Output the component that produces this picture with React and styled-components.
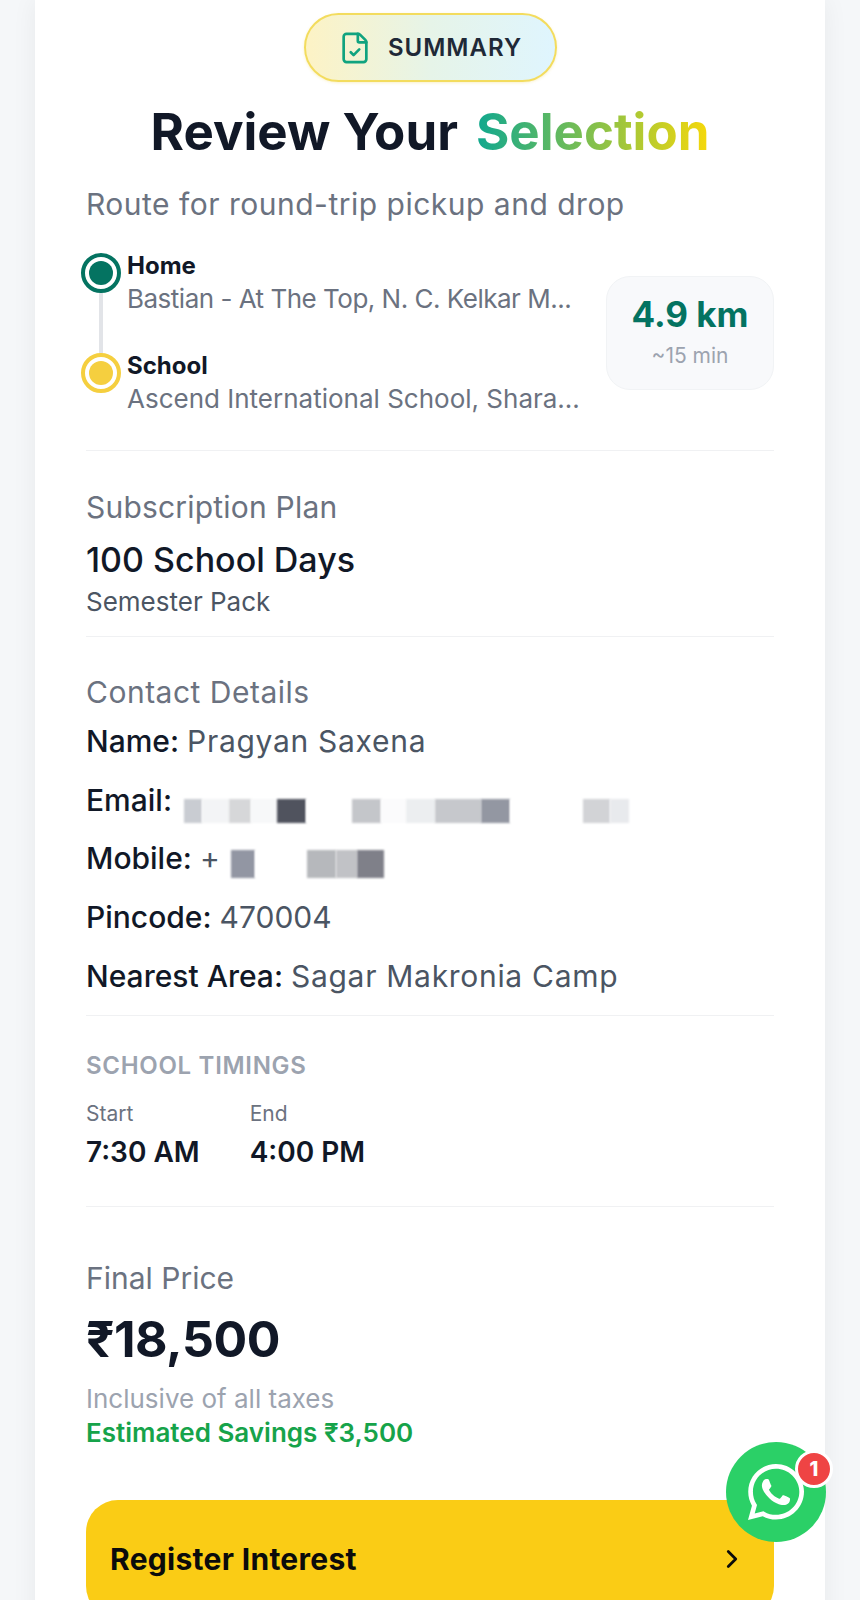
import styled, { createGlobalStyle } from "styled-components";
import { FileCheck, ChevronRight } from "lucide-react";
import { FaWhatsapp } from "react-icons/fa";

const Global = createGlobalStyle`
  html, body {
    margin: 0;
    padding: 0;
    background: #f5f7f9;
    font-family: "Inter", "Noto Sans", sans-serif;
  }
  * { box-sizing: border-box; }
`;

const Page = styled.div`
  position: relative;
  height: 1600px;
  overflow: hidden;
  padding: 0 35px;
`;

const Card = styled.main`
  background: #fff;
  height: 1700px;
  padding: 13px 51px 0;
  box-shadow: 0 0 24px rgba(15, 23, 42, 0.06);
`;

const BadgeRow = styled.div`
  display: flex;
  justify-content: center;
`;

const Badge = styled.div`
  display: flex;
  align-items: center;
  justify-content: center;
  gap: 16px;
  width: 253px;
  height: 69px;
  border: 2px solid #f3dc5e;
  border-radius: 35px;
  background: linear-gradient(90deg, #fdf3c5, #e6f4e8 50%, #dff5fe);
  box-shadow: 0 1px 3px rgba(234, 200, 40, 0.25);
  color: #10a37f;
`;

const BadgeText = styled.span`
  color: #1f2937;
  font-size: 24px;
  font-weight: 600;
  letter-spacing: 1px;
`;

const Title = styled.h1`
  margin: 18px 0 0;
  display: flex;
  justify-content: center;
  gap: 18px;
  color: #111827;
  font-size: 51px;
  line-height: 64px;
  font-weight: 700;
`;

const Accent = styled.span`
  background: linear-gradient(90deg, #10a88f, #f6d80a);
  -webkit-background-clip: text;
  background-clip: text;
  color: transparent;
`;

const Muted = styled.div`
  color: #6b7280;
  font-size: 30px;
  line-height: 40px;
  letter-spacing: ${(p) => p.$spacing ?? 0.5}px;
`;

const Subtitle = styled(Muted)`
  margin-top: 20px;
`;

const RouteRow = styled.section`
  display: flex;
  align-items: center;
  justify-content: space-between;
  margin-top: 25px;
  padding-bottom: 34px;
  border-bottom: 1px solid #f0f1f3;
`;

const Stops = styled.div`
  position: relative;
  display: flex;
  flex-direction: column;
  gap: 33px;
  margin-left: -5px;
`;

const Line = styled.div`
  position: absolute;
  left: 18px;
  top: 33px;
  height: 80px;
  width: 4px;
  background: #e2e4e8;
`;

const Stop = styled.div`
  display: flex;
  gap: 6px;
`;

const Dot = styled.div`
  position: relative;
  flex: none;
  width: 40px;
  height: 40px;
  margin-top: 4px;
  border-radius: 50%;
  border: 4px solid ${(p) => p.$color};
  background: #fff;
  display: flex;
  align-items: center;
  justify-content: center;

  &::after {
    content: "";
    width: 24px;
    height: 24px;
    border-radius: 50%;
    background: ${(p) => p.$color};
  }
`;

const StopName = styled.div`
  color: #111827;
  font-size: 24px;
  line-height: 33px;
  font-weight: 700;
`;

const StopAddress = styled.div`
  color: #6b7280;
  font-size: 26px;
  line-height: 34px;
  white-space: nowrap;
  letter-spacing: ${(p) => p.$spacing || 0}px;
`;

const Distance = styled.div`
  width: 168px;
  height: 114px;
  margin-top: 1px;
  border: 1px solid #f1f3f5;
  border-radius: 24px;
  background: #f8f9fb;
  text-align: center;
  padding-top: 16px;
`;

const Km = styled.div`
  color: #047361;
  font-size: 35px;
  line-height: 42px;
  font-weight: 700;
`;

const Minutes = styled.div`
  color: #9ca3af;
  font-size: 21px;
  line-height: 30px;
  margin-top: 6px;
`;

const Block = styled.section`
  padding: ${(p) => p.$top}px 0 ${(p) => p.$bottom}px;
  border-bottom: ${(p) => (p.$plain ? "none" : "1px solid #f0f1f3")};
`;

const PlanName = styled.div`
  color: #111827;
  font-size: 34px;
  line-height: 46px;
  font-weight: 500;
  margin-top: 10px;
`;

const PlanSub = styled.div`
  color: #4b5563;
  font-size: 26px;
  line-height: 36px;
  margin-top: 1px;
`;

const Detail = styled.div`
  display: flex;
  align-items: center;
  height: 58.6px;
  color: #111827;
  font-size: 30px;
  font-weight: 500;
  white-space: pre;
`;

const Value = styled.span`
  color: #4b5563;
  font-weight: 400;
  letter-spacing: ${(p) => p.$spacing ?? 0.7}px;
`;

const Redacted = styled.span`
  display: inline-flex;
  height: ${(p) => p.$height}px;
  margin-top: ${(p) => p.$nudge}px;
  margin-left: ${(p) => p.$left}px;
`;

const Smudge = styled.span`
  display: block;
  width: ${(p) => p.$w}px;
  background: ${(p) => p.$c};
  filter: blur(1px);
`;

const SectionLabel = styled.div`
  color: #9ca3af;
  font-size: 24px;
  line-height: 34px;
  font-weight: 600;
  letter-spacing: 0.7px;
`;

const Timings = styled.div`
  display: flex;
  gap: 50px;
  margin-top: 17px;
`;

const TimeLabel = styled.div`
  color: #6b7280;
  font-size: 21px;
  line-height: 28px;
`;

const TimeValue = styled.div`
  color: #111827;
  font-size: 28px;
  line-height: 40px;
  font-weight: 600;
  margin-top: 4px;
`;

const Price = styled.div`
  color: #111827;
  font-size: 50px;
  line-height: 68px;
  font-weight: 700;
  letter-spacing: -0.5px;
  margin-top: 7px;
`;

const Note = styled.div`
  color: #9ca3af;
  font-size: 26px;
  line-height: 34px;
  margin-top: 9px;
`;

const Savings = styled.div`
  color: #16a34a;
  font-size: 26px;
  line-height: 34px;
  font-weight: 600;
`;

const RegisterButton = styled.button`
  display: flex;
  align-items: center;
  justify-content: space-between;
  width: 100%;
  height: 118px;
  margin-top: 50px;
  padding: 0 27px 0 24px;
  border: 0;
  border-radius: 32px;
  background: #facc15;
  color: #0b0b0b;
  font-family: inherit;
  font-size: 30px;
  font-weight: 700;
  letter-spacing: 0.3px;
`;

const Whatsapp = styled.div`
  position: absolute;
  left: 726px;
  top: 1442px;
  width: 100px;
  height: 100px;
  border-radius: 50%;
  background: #2bd067;
  color: #fff;
  display: flex;
  align-items: center;
  justify-content: center;
`;

const Count = styled.span`
  position: absolute;
  right: -7px;
  top: 8px;
  width: 38px;
  height: 38px;
  border: 3px solid #fff;
  border-radius: 50%;
  background: #ef4444;
  color: #fff;
  font-size: 20px;
  font-weight: 800;
  display: flex;
  align-items: center;
  justify-content: center;
`;

const emailSmudges = [
  [18, "#c9ccd2"], [27, "#f3f4f6"], [22, "#d6d7d9"], [26, "#f7f8f9"], [29, "#50535e"],
  [46, "#fff"], [29, "#c4c6ca"], [25, "#fbfbfc"], [29, "#eceef0"], [46, "#c6c8cc"], [29, "#9397a2"],
  [73, "#fff"], [27, "#d2d3d6"], [19, "#e8eaed"],
];
const mobileSmudges = [
  [24, "#9296a3"], [52, "#fff"], [29, "#b6b8bc"], [21, "#c1c2c6"], [27, "#7f8089"],
];

export default function App() {
  return (
    <>
      <Global />
      <Page>
        <Card>
          <BadgeRow>
            <Badge>
              <FileCheck size={34} strokeWidth={1.9} />
              <BadgeText>SUMMARY</BadgeText>
            </Badge>
          </BadgeRow>
          <Title>
            <span>Review Your</span>
            <Accent>Selection</Accent>
          </Title>
          <Subtitle>Route for round-trip pickup and drop</Subtitle>

          <RouteRow>
            <Stops>
              <Line />
              <Stop>
                <Dot $color="#047361" />
                <div>
                  <StopName>Home</StopName>
                  <StopAddress $spacing={-0.5}>Bastian - At The Top, N. C. Kelkar M...</StopAddress>
                </div>
              </Stop>
              <Stop>
                <Dot $color="#f5cf3f" />
                <div>
                  <StopName>School</StopName>
                  <StopAddress>Ascend International School, Shara...</StopAddress>
                </div>
              </Stop>
            </Stops>
            <Distance>
              <Km>4.9 km</Km>
              <Minutes>~15 min</Minutes>
            </Distance>
          </RouteRow>

          <Block $top={36} $bottom={16}>
            <Muted $spacing={0.2}>Subscription Plan</Muted>
            <PlanName>100 School Days</PlanName>
            <PlanSub>Semester Pack</PlanSub>
          </Block>

          <Block $top={35} $bottom={10}>
            <Muted>Contact Details</Muted>
            <Detail>Name: <Value>Pragyan Saxena</Value></Detail>
            <Detail>
              Email:
              <Redacted $height={24} $nudge={22} $left={12}>
                {emailSmudges.map(([w, c], i) => <Smudge key={i} $w={w} $c={c} />)}
              </Redacted>
            </Detail>
            <Detail>
              Mobile: <Value>+</Value>
              <Redacted $height={28} $nudge={12} $left={11}>
                {mobileSmudges.map(([w, c], i) => <Smudge key={i} $w={w} $c={c} />)}
              </Redacted>
            </Detail>
            <Detail>Pincode: <Value $spacing={0}>470004</Value></Detail>
            <Detail>Nearest Area: <Value>Sagar Makronia Camp</Value></Detail>
          </Block>

          <Block $top={33} $bottom={34}>
            <SectionLabel>SCHOOL TIMINGS</SectionLabel>
            <Timings>
              <div>
                <TimeLabel>Start</TimeLabel>
                <TimeValue>7:30 AM</TimeValue>
              </div>
              <div>
                <TimeLabel>End</TimeLabel>
                <TimeValue>4:00 PM</TimeValue>
              </div>
            </Timings>
          </Block>

          <Block $top={51} $bottom={0} $plain>
            <Muted $spacing={0}>Final Price</Muted>
            <Price>₹18,500</Price>
            <Note>Inclusive of all taxes</Note>
            <Savings>Estimated Savings ₹3,500</Savings>
            <RegisterButton>
              Register Interest
              <ChevronRight size={30} strokeWidth={2.2} />
            </RegisterButton>
          </Block>
        </Card>
        <Whatsapp>
          <FaWhatsapp size={64} />
          <Count>1</Count>
        </Whatsapp>
      </Page>
    </>
  );
}
